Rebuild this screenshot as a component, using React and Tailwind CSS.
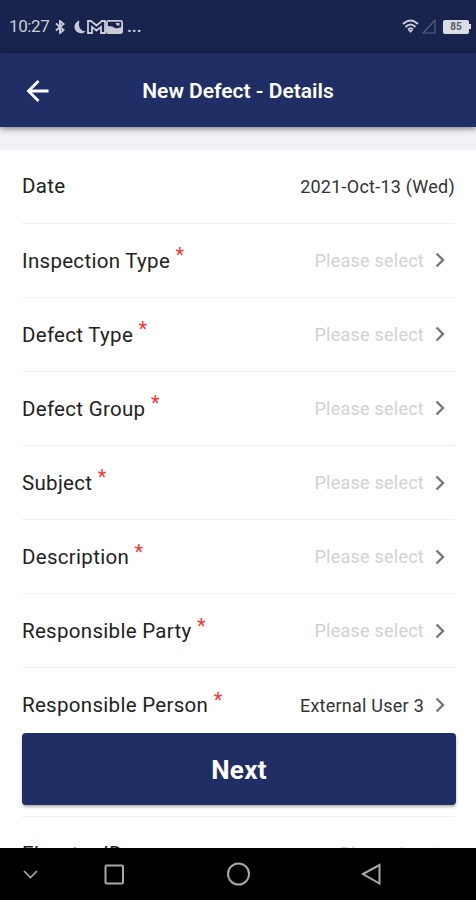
import React from 'react';

const rows = [
  { label: 'Date', value: '2021-Oct-13 (Wed)', plain: true },
  { label: 'Inspection Type', required: true },
  { label: 'Defect Type', required: true },
  { label: 'Defect Group', required: true },
  { label: 'Subject', required: true },
  { label: 'Description', required: true },
  { label: 'Responsible Party', required: true },
  { label: 'Responsible Person', required: true, value: 'External User 3' },
  { label: '', hidden: true },
  { label: 'Elevator ID', placeholder: 'Please input', plain: true, inset: true },
];

const Chevron = () => (
  <svg width="12" height="18" viewBox="0 0 12 18" fill="none" stroke="#777" strokeWidth="2.4" className="ml-[10px] mr-[9px] shrink-0">
    <path d="M2.500 2.500L9 9L2.500 15.500" />
  </svg>
);

const Row = ({ label, value, placeholder = 'Please select', required, plain, hidden, inset }) => (
  <div className={inset ? 'flex h-[73px] shrink-0 items-center justify-between' : 'flex h-[74.15px] shrink-0 items-center justify-between border-b border-[#f1f1f2]'}>
    <div className="flex items-center pt-[1.5px] text-[20.5px] tracking-[0.3px] text-[#222]">
      {label}
      {required && <span className="mb-[12px] ml-[5.5px] text-[20px] leading-5 text-[#f33]">*</span>}
    </div>
    {!hidden && (
      <div className="flex items-center text-[18px] tracking-[0.24px]">
        <span className={value ? 'text-[#333]' : inset ? 'mr-[14px] text-[#d0d2d3]' : 'text-[#d0d2d3]'}>
          {value || placeholder}
        </span>
        {!plain && <Chevron />}
      </div>
    )}
  </div>
);

const StatusBar = () => (
  <div className="flex h-[53px] shrink-0 items-center justify-between bg-[#18234e] pr-[5px] pl-[9px] text-[#c9ccd6]">
    <div className="flex items-center">
      <span className="w-[40px] text-[17px] tracking-[-0.4px]">10:27</span>
      <svg width="12" height="14" viewBox="0 0 12 14" fill="none" stroke="currentColor" strokeWidth="1.9" className="ml-[5px]">
        <path d="M2 3.500L9.500 10L6 13V1L9.500 4L2 10.500" />
      </svg>
      <svg width="13" height="14" viewBox="0 0 13 14" fill="currentColor" className="ml-[7px]">
        <path d="M6.500 0.500A6.500 6.500 0 1 0 12.500 11.500Q4 10.500 6.500 0.500Z" />
      </svg>
      <svg width="19" height="14" viewBox="0 0 19 14" fill="none" stroke="currentColor" strokeWidth="1.8" className="ml-px">
        <path d="M1 13V1H4L9.500 5.500L15 1H18V13H14V7L9.500 10.500L5 7V13Z" />
      </svg>
      <svg width="17" height="14" viewBox="0 0 17 14">
        <rect x="0.900" y="0.900" width="15.200" height="12.200" rx="1.500" fill="none" stroke="currentColor" strokeWidth="1.800" />
        <path d="M1 6L6 6.500L10 8.500L16 7V13H1ZM9.500 3H13.500V5.500H11Z" fill="currentColor" />
      </svg>
      <span className="ml-[4px] text-[17px] font-semibold">...</span>
    </div>
    <div className="flex items-center">
      <svg width="17" height="15" viewBox="0 0 17 15" fill="none" stroke="currentColor" strokeWidth="2">
        <path d="M1 5Q8.500 -2 16 5M3.500 8Q8.500 3 13.500 8M6 10.500Q8.500 8 11 10.500" />
        <path d="M6 11H11L8.500 14Z" fill="currentColor" stroke="none" />
      </svg>
      <svg width="14" height="15" viewBox="0 0 14 15" fill="none" stroke="#59617f" strokeWidth="1.2" className="ml-[3px]">
        <path d="M1 14H13V1Z" />
      </svg>
      <div className="ml-[7px] flex h-[14px] w-[26px] items-center justify-center rounded-[2px] bg-[#dcdde3] text-[10px] font-bold text-[#555b70]">85</div>
      <div className="h-[5px] w-[2px] bg-[#dcdde3]" />
    </div>
  </div>
);

const NavBar = () => (
  <div className="relative z-20 h-[52px] shrink-0 bg-black">
    <svg width="476" height="52" viewBox="0 0 476 52" fill="none" stroke="#a8a8a8" strokeWidth="2">
      <path d="M24 23L30.500 29.500L37 23" strokeWidth="1.7" />
      <rect x="105.500" y="17.500" width="17.500" height="18" rx="1" />
      <circle cx="238.500" cy="26" r="10.500" />
      <path d="M363 26L379.500 17V35.500Z" />
    </svg>
  </div>
);

const App = () => {
  return (
    <div className="relative flex h-[900px] w-[476px] flex-col overflow-hidden bg-white font-[Roboto,sans-serif]">
      <StatusBar />
      <header className="relative z-10 flex h-[74px] shrink-0 items-center bg-[#1f2e64] px-[26px] pt-px shadow-[0_2px_6px_rgba(0,0,0,0.45)]">
        <svg width="24" height="24" viewBox="0 0 24 24" fill="none" stroke="#fff" strokeWidth="2.8">
          <path d="M22.500 12H3M12.500 2L2.500 12L12.500 22" />
        </svg>
        <h1 className="flex-1 pt-[2px] pr-[24px] text-center text-[21px] font-semibold text-white">New Defect - Details</h1>
      </header>
      <div className="h-[22.5px] shrink-0 bg-[#f3f3f7]" />

      <main className="flex min-h-0 flex-1 flex-col overflow-hidden pr-[21px] pl-[22px]">
        {rows.map((row, i) => (
          <Row key={i} {...row} />
        ))}
      </main>

      <button className="absolute bottom-[95px] left-[22px] z-10 h-[72px] w-[434px] rounded-[4px] bg-[#1f2e64] pt-[2px] text-[26px] font-bold tracking-[0.3px] text-white shadow-[0_2px_3px_rgba(0,0,0,0.3)]">
        Next
      </button>
      <NavBar />
    </div>
  );
};

export default App;
